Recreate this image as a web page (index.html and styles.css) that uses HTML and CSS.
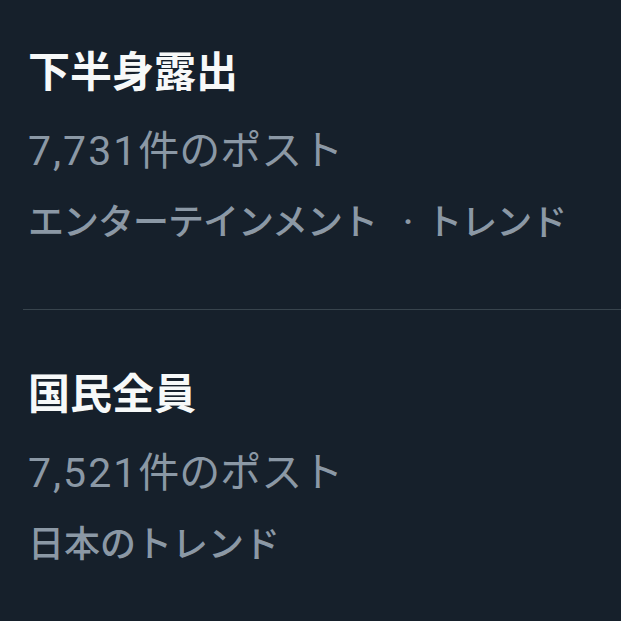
FILE: index.html
```html
<!DOCTYPE html>
<html lang="ja">
<head>
    <meta charset="UTF-8">
    <meta name="viewport" content="width=device-width, initial-scale=1.0">
    <title>トレンド</title>
    <link rel="stylesheet" href="styles.css">
</head>
<body>

    <div class="trend-list">
        <div class="trend trend-first">
            <div class="trend-title">下半身露出</div>
            <div class="trend-count"><span class="num">7,731</span>件のポスト</div>
            <div class="trend-meta tight">エンターテインメント<span class="sep">·</span>トレンド</div>
        </div>

        <div class="divider"></div>

        <div class="trend">
            <div class="trend-title">国民全員</div>
            <div class="trend-count"><span class="num">7,521</span>件のポスト</div>
            <div class="trend-meta">日本のトレンド</div>
        </div>
    </div>

</body>
</html>
```

FILE: styles.css
```css
/* General reset */
* {
    margin: 0;
    padding: 0;
    box-sizing: border-box;
}

body {
    background-color: #16202b;
    font-family: Roboto, "Noto Sans CJK JP", sans-serif;
    width: 621px;
    height: 621px;
    overflow: hidden;
}

/* Trend rows */
.trend {
    padding: 61px 0 62px 28px;
}

.trend-first {
    padding-top: 49px;
}

.trend-title {
    color: #f7f9f9;
    font-size: 42px;
    font-weight: 700;
    line-height: 48px;
}

.trend-count {
    color: #8b98a5;
    font-size: 41px;
    font-weight: 400;
    line-height: 48px;
    margin-top: 30px;
}

.trend-count .num {
    letter-spacing: 2px;
}

.trend-meta {
    color: #8b98a5;
    font-size: 36px;
    font-weight: 500;
    line-height: 48px;
    margin-top: 24px;
}

.trend-meta.tight {
    letter-spacing: -1px;
}

.trend-meta .sep {
    padding: 0 14px 0 26px;
}

.divider {
    height: 1px;
    margin-left: 23px;
    background-color: #38444d;
}
```
